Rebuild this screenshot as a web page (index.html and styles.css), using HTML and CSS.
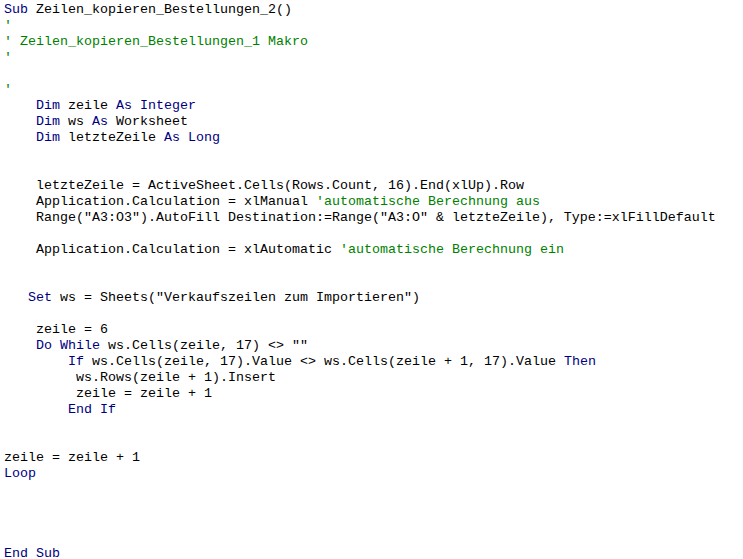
FILE: index.html
```html
<!DOCTYPE html>
<html>
<head>
<meta charset="utf-8">
<link rel="stylesheet" href="styles.css">
</head>
<body>
<pre class="code"><span class="kw">Sub</span> Zeilen_kopieren_Bestellungen_2()
<span class="cm">'</span>
<span class="cm">' Zeilen_kopieren_Bestellungen_1 Makro</span>
<span class="cm">'</span>

<span class="cm">'</span>
    <span class="kw">Dim</span> zeile <span class="kw">As</span> <span class="kw">Integer</span>
    <span class="kw">Dim</span> ws <span class="kw">As</span> Worksheet
    <span class="kw">Dim</span> letzteZeile <span class="kw">As</span> <span class="kw">Long</span>


    letzteZeile = ActiveSheet.Cells(Rows.Count, 16).End(xlUp).Row
    Application.Calculation = xlManual <span class="cm">'automatische Berechnung aus</span>
    Range("A3:O3").AutoFill Destination:=Range("A3:O" &amp; letzteZeile), Type:=xlFillDefault

    Application.Calculation = xlAutomatic <span class="cm">'automatische Berechnung ein</span>


   <span class="kw">Set</span> ws = Sheets("Verkaufszeilen zum Importieren")

    zeile = 6
    <span class="kw">Do</span> <span class="kw">While</span> ws.Cells(zeile, 17) &lt;&gt; ""
        <span class="kw">If</span> ws.Cells(zeile, 17).Value &lt;&gt; ws.Cells(zeile + 1, 17).Value <span class="kw">Then</span>
         ws.Rows(zeile + 1).Insert
         zeile = zeile + 1
        <span class="kw">End</span> <span class="kw">If</span>


zeile = zeile + 1
<span class="kw">Loop</span>




<span class="kw">End</span> <span class="kw">Sub</span>
</pre>
</body>
</html>
```

FILE: styles.css
```css
html, body {
  margin: 0;
  padding: 0;
  background: #ffffff;
}

.code {
  margin: 0;
  padding: 2px 0 0 4px;
  font-family: "Liberation Mono", monospace;
  font-size: 13.333px;
  line-height: 16px;
  color: #000000;
  white-space: pre;
}

.kw {
  color: #00007f;
}

.cm {
  color: #007f00;
}
```
